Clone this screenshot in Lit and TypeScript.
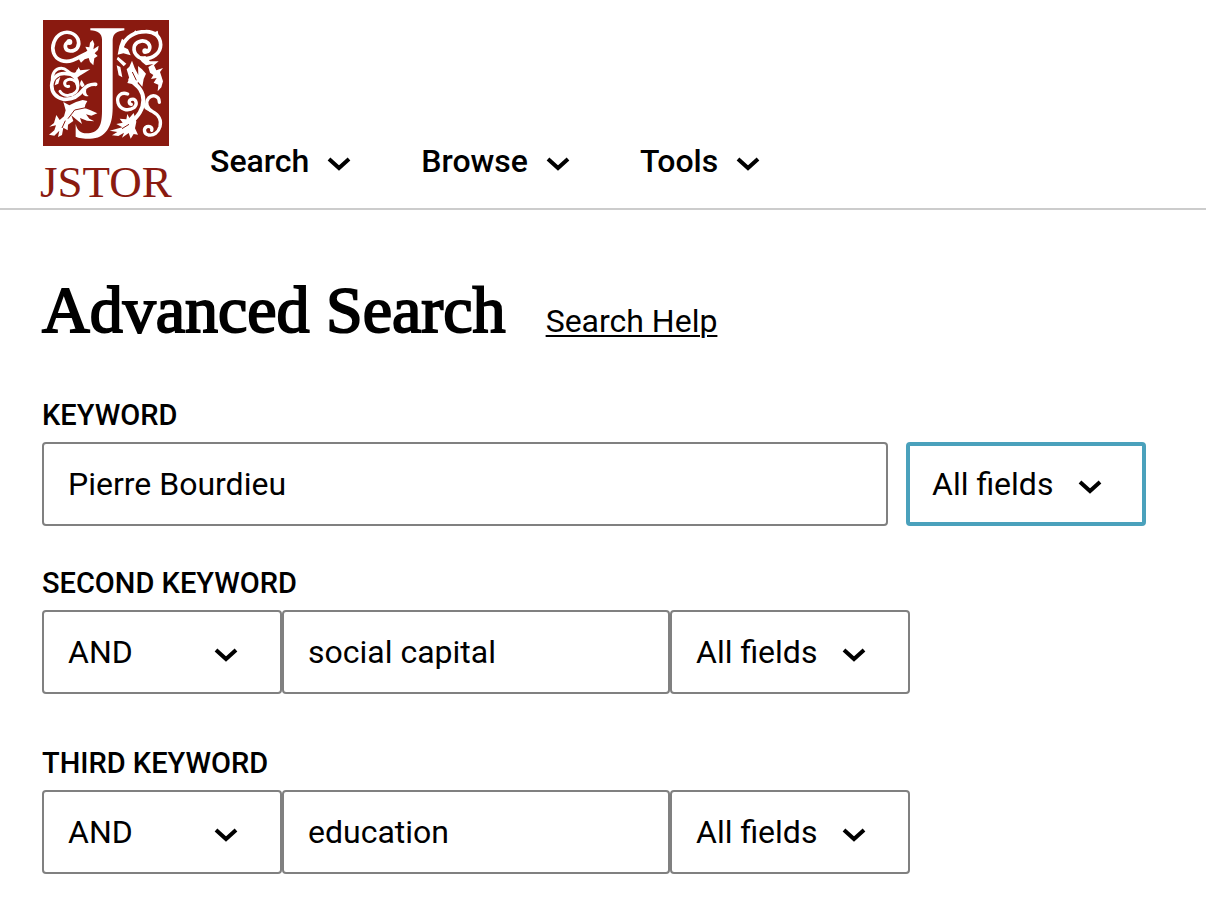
import { LitElement, html, css, svg } from "lit";
import { customElement, property } from "lit/decorators.js";

const chevron = html`<svg class="chevron" viewBox="0 0 24 16" aria-hidden="true">
  <path d="M2 3 L12 12 L22 3" fill="none" stroke="#000" stroke-width="4" />
</svg>`;

const chevronStyles = css`
  .chevron {
    display: block;
    width: 24px;
    height: 16px;
    flex: none;
  }
`;

const leftVines = svg`
  <g fill="none" stroke="#fff" stroke-linecap="round">
    <path stroke-width="11" d="M84 72 C71 80 74 98 91 99 C111 99 121 82 114 64 C105 44 82 38 64 47 C43 58 34 84 41 105 C49 128 75 135 98 127 C115 121 124 113 140 106" />
    <path stroke-width="9" d="M60 220 C66 230 76 233 86 232 C103 229 116 219 113 202 C110 188 91 178 78 188 C70 195 75 208 86 205" />
    <path stroke-width="11" d="M113 202 C112 178 98 167 79 167 C54 164 36 180 35 202 C35 224 47 238 70 244 C98 246 118 232 130 215 C141 201 153 198 167 199" />
    <path stroke-width="9" d="M37 186 C36 166 46 151 64 151 C77 151 80 158 92 166 C105 172 112 168 114 158" />
  </g>
  <g fill="#fff">
    <circle cx="88" cy="72" r="9" />
    <path d="M116 122 L130 108 L142 98 L136 86 L148 88 L150 74 L158 66 L163 78 L160 94 L176 83 L174 96 L164 106 L173 114 L163 121 L160 142 L150 132 L146 120 L134 124 L123 134 Z" />
    <path d="M104 170 L112 160 L115 147 L121 157 L151 154 L134 164 L118 174 L108 182 Z" />
    <path d="M125 186 C117 196 120 204 127 208 L134 202 Z" />
    <path d="M128 216 C123 228 135 238 146 234 C138 230 137 222 139 214 Z" />
    <path d="M61 176 L48 186 L44 202 L55 197 Z" />
    <path d="M70 252 L88 262 L108 252 L128 246 L142 249 L136 260 L134 270 L150 276 L172 286 L154 293 L138 289 L148 302 L163 310 L141 308 L120 300 L126 318 L108 304 L94 292 L100 309 L84 320 L83 337 L70 329 L66 351 L54 357 L58 338 L43 353 L27 350 L43 337 L48 322 L28 326 L42 315 L49 291 L59 306 L72 295 L77 277 Z" />
  </g>
  <g fill="none" stroke="#8a1a10" stroke-width="3">
    <path d="M84 302 L104 276 L142 268 M66 330 L76 308" />
  </g>`;

const rightVines = svg`
  <g transform="translate(198 0)">
    <g fill="none" stroke="#fff" stroke-linecap="round">
      <path stroke-width="11" d="M116 102 C130 103 136 88 127 76 C115 64 94 68 86 82 C79 101 92 119 112 122 C140 124 164 105 164 80 C164 55 143 40 119 41 C85 41 61 57 48 85" />
      <path stroke-width="12" d="M73 184 C92 202 112 216 112 246 C112 277 94 295 76 314" />
      <path stroke-width="10" d="M65 228 C44 220 31 237 36 254 C42 275 66 281 84 269 C97 258 89 240 76 244 C67 248 68 257 76 259" />
      <path stroke-width="10" d="M160 253 C160 233 140 228 128 240 C116 254 124 272 140 281 C158 291 167 306 162 326 C157 344 143 354 127 351 C113 347 112 331 122 326 C132 323 140 329 137 337" />
      <path stroke-width="9" d="M112 252 L120 270 L134 278" />
    </g>
    <g fill="#fff">
      <circle cx="117" cy="99" r="8" />
      <path d="M79 49 L88 37 L96 46 Z M142 44 L155 38 L158 54 Z" />
      <path d="M35 110 L40 84 L48 62 L58 70 L54 88 L66 94 L74 112 L52 106 Z" />
      <path d="M36 116 L61 137 L53 145 L32 124 Z M32 142 L43 147 L49 178 L38 172 Z" />
      <path d="M62 154 L70 146 L78 128 L86 150 L97 171 L96 144 L108 154 L120 167 L113 183 L109 206 L96 191 L91 209 L78 198 L64 195 L70 181 Z" />
      <path d="M96 118 L108 132 L120 142 L142 138 L127 147 L132 164 L142 171 L135 183 L152 180 L143 194 L157 200 L155 220 L166 208 L171 190 L166 174 L162 162 L171 150 L151 157 L144 142 L158 130 L132 130 L118 114 Z" />
      <path d="M83 285 L70 300 L64 288 L61 304 L41 302 L50 314 L31 318 L49 328 L11 338 L34 342 L18 352 L37 354 L54 344 L48 359 L68 345 L74 362 L83 348 L96 350 L87 331 L91 311 Z" />
    </g>
    <g fill="none" stroke="#8a1a10" stroke-width="3">
      <path d="M48 332 L69 319 M79 162 L91 187" />
    </g>
  </g>`;

@customElement("jstor-logo")
class JstorLogo extends LitElement {
  static styles = css`
    :host { display: block; }
    .link { display: block; color: #8a1a10; text-decoration: none; }
    .mark { display: block; width: 126px; height: 126px; margin-left: 3px; }
    .name {
      display: block;
      margin-top: 12px;
      font: 45px/48px "Liberation Serif", serif;
      white-space: nowrap;
    }
  `;

  render() {
    return html`<a class="link" href="#" aria-label="JSTOR home">
      <svg class="mark" viewBox="9 6 378 378" aria-hidden="true">
        <rect x="9" y="6" width="378" height="378" fill="#8a1a10" />
        <path fill="#fff" d="M151 31 H253 V37 C231 40 219 46 218 66 V270 C218 325 197 362 150 362 C131 362 116 360 107 356 V318 C112 337 121 346 140 346 C174 346 186 326 186 280 V64 C186 46 173 39 151 37 Z" />
        ${leftVines}${rightVines}
      </svg>
      <span class="name">JSTOR</span>
    </a>`;
  }
}

@customElement("select-field")
class SelectField extends LitElement {
  @property() label = "";
  @property() value = "";
  @property({ attribute: false }) options: string[] = [];
  @property({ type: Boolean, reflect: true }) active = false;

  static styles = [
    chevronStyles,
    css`
      :host { display: block; position: relative; flex: 0 1 240px; }
      .control {
        display: block;
        box-sizing: border-box;
        width: 100%;
        height: 84px;
        margin: 0;
        padding: 0 24px;
        border: 2px solid #808080;
        border-radius: 4px;
        background: #fff;
        color: #000;
        font: 32px/40px Roboto, sans-serif;
        appearance: none;
        outline: none;
      }
      :host([active]) .control { border: 4px solid #4aa1bc; padding: 0 22px; }
      .chevron {
        position: absolute;
        top: 37px;
        right: 44px;
        pointer-events: none;
      }
    `,
  ];

  render() {
    return html`<select class="control" aria-label=${this.label}>
        ${this.options.map(
          (o) => html`<option ?selected=${o === this.value}>${o}</option>`
        )}
      </select>
      ${chevron}`;
  }
}

const FIELDS = ["All fields", "Author", "Item Title", "Abstract", "Caption"];
const OPERATORS = ["AND", "OR", "NOT", "NEAR 5", "NEAR 10", "NEAR 25"];

const extraRows = [
  { id: "second", label: "SECOND KEYWORD", text: "social capital" },
  { id: "third", label: "THIRD KEYWORD", text: "education" },
];

@customElement("app-root")
class AppRoot extends LitElement {
  static styles = [
    chevronStyles,
    css`
      :host {
        display: block;
        background: #fff;
        color: #000;
        font-family: Roboto, sans-serif;
      }
      .header {
        display: flex;
        align-items: flex-end;
        gap: 40px;
        box-sizing: border-box;
        height: 210px;
        padding: 20px 40px 2px;
        border-bottom: 2px solid #ccc;
      }
      .logo { width: 130px; }
      .nav { display: flex; gap: 70px; padding-bottom: 25px; }
      .item {
        display: flex;
        align-items: center;
        gap: 18px;
        padding: 0;
        border: 0;
        background: none;
        color: #000;
        font: 500 32px/40px Roboto, sans-serif;
      }
      .item .chevron { margin-top: 6px; }
      .main { padding: 60px 60px 40px 42px; }
      .heading { display: flex; align-items: baseline; gap: 40px; margin-bottom: 48px; }
      .title {
        margin: 0;
        font: 400 66px/80px "Liberation Serif", serif;
        -webkit-text-stroke: 2px #000;
      }
      .help {
        color: #000;
        font-size: 32px;
        line-height: 40px;
        text-decoration-thickness: 2px;
        text-underline-offset: 3px;
      }
      .group { margin-bottom: 40px; }
      .group.extra { margin-bottom: 52px; }
      .group:last-child { margin-bottom: 0; }
      .label { display: block; margin-bottom: 10px; font: 500 29px/34px Roboto, sans-serif; }
      .row { display: flex; }
      .row.first { gap: 18px; }
      .row.joined { max-width: 868px; }
      .text {
        flex: 1;
        min-width: 0;
        box-sizing: border-box;
        height: 84px;
        margin: 0;
        padding: 0 24px;
        border: 2px solid #808080;
        border-radius: 4px;
        background: #fff;
        color: #000;
        font: 32px/40px Roboto, sans-serif;
      }
    `,
  ];

  render() {
    return html`
      <header class="header">
        <jstor-logo class="logo"></jstor-logo>
        <nav class="nav">
          ${["Search", "Browse", "Tools"].map(
            (name) => html`<button class="item" type="button">${name}${chevron}</button>`
          )}
        </nav>
      </header>
      <main class="main">
        <div class="heading">
          <h1 class="title">Advanced Search</h1>
          <a class="help" href="#">Search Help</a>
        </div>
        <div class="group">
          <label class="label" for="keyword">KEYWORD</label>
          <div class="row first">
            <input class="text" id="keyword" type="text" value="Pierre Bourdieu" />
            <select-field active label="Keyword field" value="All fields" .options=${FIELDS}></select-field>
          </div>
        </div>
        ${extraRows.map(
          (r) => html`<div class="group extra">
            <label class="label" for=${r.id}>${r.label}</label>
            <div class="row joined">
              <select-field label="Operator" value="AND" .options=${OPERATORS}></select-field>
              <input class="text" id=${r.id} type="text" value=${r.text} />
              <select-field label="Field" value="All fields" .options=${FIELDS}></select-field>
            </div>
          </div>`
        )}
      </main>
    `;
  }
}
